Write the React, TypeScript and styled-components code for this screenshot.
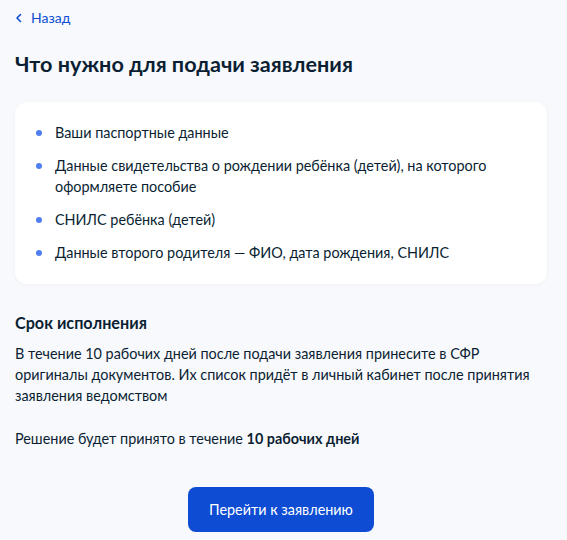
import React from "react";
import styled, { createGlobalStyle } from "styled-components";

const GlobalStyle = createGlobalStyle`
	html, body {
		margin: 0;
		padding: 0;
		background: #f8f9fd;
	}
	body {
		font-family: Lato, "Noto Sans", sans-serif;
		color: #0b1f33;
		-webkit-font-smoothing: antialiased;
	}
`;

const items = [
	"Ваши паспортные данные",
	"Данные свидетельства о рождении ребёнка (детей), на которого оформляете пособие",
	"СНИЛС ребёнка (детей)",
	"Данные второго родителя — ФИО, дата рождения, СНИЛС",
];

export default function App() {
	return (
		<>
			<GlobalStyle />
			<Page>
				<BackLink href="#">
					<svg width="8" height="10" viewBox="0 0 8 10" fill="none">
						<path d="M5.5 1.5L2 5l3.5 3.5" stroke="#0d4cd3" strokeWidth="1.6" strokeLinecap="round" strokeLinejoin="round" />
					</svg>
					Назад
				</BackLink>
				<Title>Что нужно для подачи заявления</Title>
				<Card>
					<List>
						{items.map((text, i) => (
							<Item key={i}>{text}</Item>
						))}
					</List>
				</Card>
				<Subtitle>Срок исполнения</Subtitle>
				<Paragraph>
					В течение 10 рабочих дней после подачи заявления принесите в СФР оригиналы документов. Их список придёт в личный кабинет после принятия заявления ведомством
				</Paragraph>
				<Paragraph $top={22}>
					Решение будет принято в течение <b>10 рабочих дней</b>
				</Paragraph>
				<Actions>
					<PrimaryButton>Перейти к заявлению</PrimaryButton>
				</Actions>
			</Page>
		</>
	);
}

const Page = styled.div`
	padding: 9px 20px 0 15px;
	display: flex;
	flex-direction: column;
`;

const BackLink = styled.a`
	display: inline-flex;
	align-items: center;
	gap: 8px;
	align-self: flex-start;
	font-size: 14px;
	line-height: 18px;
	color: #0d4cd3;
	text-decoration: none;
`;

const Title = styled.h1`
	margin: 22px 0 0;
	font-size: 21.6px;
	line-height: 30px;
	font-weight: 700;
	color: #0b1f33;
`;

const Card = styled.div`
	margin-top: 23px;
	background: #ffffff;
	border-radius: 12px;
	padding: 20px 24px 21px 21px;
	box-shadow: 0 1px 4px rgba(11, 31, 51, 0.04);
`;

const List = styled.ul`
	list-style: none;
	margin: 0;
	padding: 0;
	display: flex;
	flex-direction: column;
	gap: 12px;
`;

const Item = styled.li`
	position: relative;
	padding-left: 19px;
	font-size: 14.4px;
	line-height: 21px;
	color: #0b1f33;

	&::before {
		content: "";
		position: absolute;
		left: 0;
		top: 8px;
		width: 6px;
		height: 6px;
		border-radius: 50%;
		background: #4f7ef0;
	}
`;

const Subtitle = styled.h2`
	margin: 28px 0 0;
	font-size: 16.2px;
	line-height: 22px;
	font-weight: 700;
`;

const Paragraph = styled.p<{ $top?: number }>`
	margin: ${(p) => p.$top ?? 9}px 0 0;
	font-size: 14.4px;
	line-height: 21px;

	b {
		font-weight: 700;
	}
`;

const Actions = styled.div`
	display: flex;
	justify-content: center;
	margin-top: 38px;
`;

const PrimaryButton = styled.button`
	width: 186px;
	height: 45px;
	border: none;
	border-radius: 8px;
	background: #0d4cd3;
	color: #ffffff;
	font-family: Lato, "Noto Sans", sans-serif;
	font-size: 14.4px;
	cursor: pointer;
`;
